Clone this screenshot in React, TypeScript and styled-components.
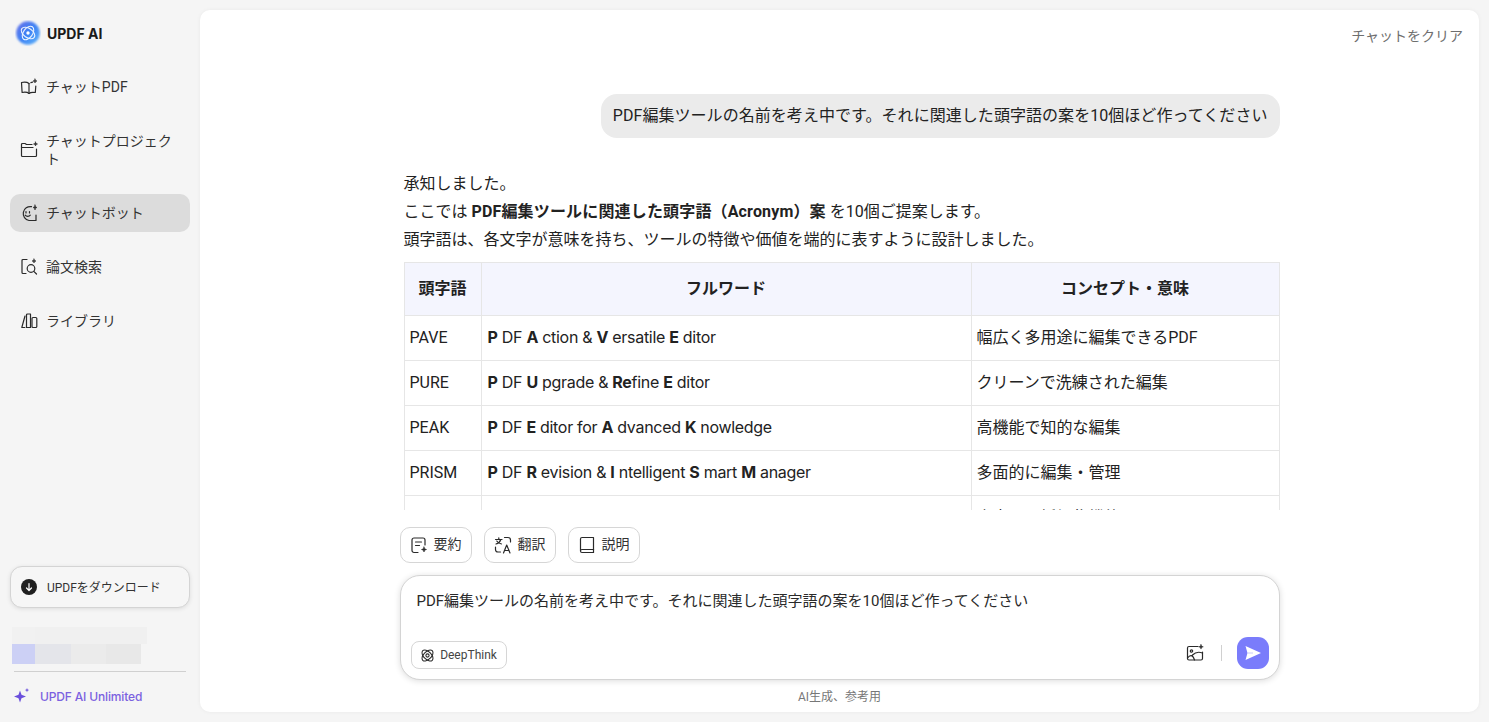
import React from "react";
import styled, { createGlobalStyle } from "styled-components";

const FONT = `Roboto, "Noto Sans CJK JP", "Noto Sans", sans-serif`;
const BRAND_FONT = `Inter, "Noto Sans", sans-serif`;

const Global = createGlobalStyle`
  html, body, #root { margin: 0; height: 100%; }
  body { background: #f5f5f5; font-family: ${FONT}; color: #222; overflow: hidden; }
  * { box-sizing: border-box; }
`;

const Shell = styled.div`
  display: flex;
  height: 100vh;
`;

const Sidebar = styled.aside`
  width: 200px;
  flex: none;
  display: flex;
  flex-direction: column;
  padding: 21px 10px 0;
`;

const Brand = styled.div`
  display: flex;
  align-items: center;
  gap: 7px;
  height: 24px;
  padding-left: 6px;
  font-family: ${BRAND_FONT};
  font-size: 14px;
  font-weight: 700;
  color: #1a1a1a;
  margin-bottom: 23px;
`;

const Nav = styled.nav`
  display: flex;
  flex-direction: column;
  gap: 16px;
`;

const NavItem = styled.div<{ $active?: boolean }>`
  display: flex;
  align-items: center;
  gap: 8px;
  padding: 10px;
  border-radius: 10px;
  font-size: 14px;
  line-height: 18px;
  color: #333;
  background: ${(p) => (p.$active ? "#dcdcdc" : "transparent")};
  svg { flex: none; }
`;

const Spacer = styled.div`
  flex: 1;
`;

const DownloadButton = styled.div`
  height: 42px;
  display: flex;
  align-items: center;
  gap: 10px;
  padding-left: 10px;
  border: 1px solid #d4d4d4;
  border-radius: 12px;
  background: #f6f6f6;
  box-shadow: 0 1px 4px rgba(0, 0, 0, 0.1);
  font-size: 12px;
  color: #333;
`;

const DownloadLabel = styled.span`
  padding-bottom: 2px;
`;

const DownloadDot = styled.span`
  width: 16px;
  height: 16px;
  border-radius: 50%;
  background: #1f1f1f;
  display: flex;
  align-items: center;
  justify-content: center;
`;

const Mosaic = styled.div`
  margin: 19px 0 0 2px;
  display: flex;
  flex-direction: column;
`;

const MosaicRow = styled.div`
  display: flex;
`;

const MosaicCell = styled.div<{ $w: number; $h: number; $c: string }>`
  width: ${(p) => p.$w}px;
  height: ${(p) => p.$h}px;
  background: ${(p) => p.$c};
`;

const Divider = styled.div`
  height: 1px;
  background: #d0d0d0;
  margin: 7px 4px 0;
`;

const Unlimited = styled.div`
  display: flex;
  align-items: center;
  gap: 9px;
  height: 50px;
  padding: 0 0 2px 4px;
  font-family: ${BRAND_FONT};
  font-size: 12px;
  font-weight: 500;
  letter-spacing: -0.15px;
  color: #7b61e0;
`;

const Main = styled.main`
  flex: 1;
  margin: 10px 10px 10px 0;
  background: #fff;
  border-radius: 10px;
  box-shadow: 0 0 4px rgba(0, 0, 0, 0.05);
  display: flex;
  flex-direction: column;
  align-items: center;
  min-width: 0;
`;

const TopBar = styled.div`
  align-self: stretch;
  height: 50px;
  flex: none;
  display: flex;
  justify-content: flex-end;
  align-items: center;
  padding: 0 16px 1px 0;
  font-size: 14px;
  color: #6e6e6e;
`;

const Conversation = styled.div`
  width: 880px;
  height: 450px;
  flex: none;
  overflow: hidden;
  padding: 34px 0 0 4px;
`;

const UserRow = styled.div`
  display: flex;
  justify-content: flex-end;
  margin-bottom: 32px;
`;

const UserBubble = styled.div`
  background: #ebebeb;
  border-radius: 16px;
  padding: 10px 12px;
  font-size: 16px;
  line-height: 24px;
  letter-spacing: 0.05px;
  color: #222;
  white-space: nowrap;
`;

const Paragraph = styled.p`
  margin: 0;
  font-size: 16px;
  line-height: 28px;
  color: #222;
  b { font-weight: 700; letter-spacing: 0.16px; }
`;

const Table = styled.table`
  margin-top: 8px;
  width: 875px;
  table-layout: fixed;
  border-collapse: collapse;
  font-size: 16px;
  color: #222;
`;

const Th = styled.th<{ $w: number }>`
  width: ${(p) => p.$w}px;
  height: 53px;
  background: #f4f5fe;
  border: 1px solid #e6e6e6;
  font-weight: 700;
  text-align: center;
  padding: 0 6px 5px;
`;

const Td = styled.td`
  height: 45px;
  border: 1px solid #e6e6e6;
  padding: 0 5px;
  line-height: 24px;
`;

const WordCell = styled(Td)`
  padding: 0 5px 2px 6px;
  font-family: ${BRAND_FONT};
  letter-spacing: -0.3px;
  b { font-weight: 700; }
`;

const Chips = styled.div`
  width: 880px;
  flex: none;
  display: flex;
  gap: 12px;
  margin-top: 17px;
`;

const Chip = styled.div`
  width: 72px;
  height: 36px;
  display: flex;
  align-items: center;
  justify-content: center;
  gap: 6px;
  border: 1px solid #d6d6d6;
  border-radius: 10px;
  background: #fff;
  font-size: 14px;
  color: #333;
`;

const ChipLabel = styled.span`
  padding-bottom: 4px;
`;

const Composer = styled.div`
  width: 880px;
  height: 105px;
  flex: none;
  margin-top: 12px;
  border: 1px solid #d4d4d4;
  border-radius: 20px;
  background: #fff;
  box-shadow: 0 1px 6px rgba(0, 0, 0, 0.14);
  padding: 15px 10px 10px;
  display: flex;
  flex-direction: column;
  justify-content: space-between;
`;

const Prompt = styled.div`
  font-size: 15px;
  line-height: 21px;
  padding-left: 6px;
  color: #2a2a2a;
`;

const ComposerBar = styled.div`
  display: flex;
  align-items: center;
  justify-content: space-between;
`;

const DeepThink = styled.div`
  width: 96px;
  height: 28px;
  margin-top: 4px;
  display: flex;
  align-items: center;
  justify-content: center;
  gap: 5px;
  border: 1px solid #d6d6d6;
  border-radius: 8px;
  font-size: 12px;
  color: #444;
`;

const Tools = styled.div`
  display: flex;
  align-items: center;
`;

const ToolSep = styled.div`
  width: 1px;
  height: 16px;
  background: #d0d0d0;
  margin: 0 15px 0 17px;
`;

const SendButton = styled.div`
  width: 32px;
  height: 32px;
  border-radius: 11px;
  background: #7a7cfb;
  display: flex;
  align-items: center;
  justify-content: center;
`;

const Disclaimer = styled.div`
  flex: none;
  margin-top: 9px;
  font-size: 12px;
  line-height: 16px;
  color: #777;
`;

const Line = styled.svg.attrs({ fill: "none", stroke: "#2a2a2a", strokeWidth: 1.2, strokeLinecap: "round", strokeLinejoin: "round" })``;

const LogoBox = styled.svg`
  margin: 0 -1px;
  flex: none;
`;

const Logo = () => (
  <LogoBox width="26" height="26" viewBox="0 0 26 26">
    <defs>
      <linearGradient id="lg" x1="0" y1="0" x2="1" y2="1">
        <stop offset="0" stopColor="#6a6fe8" />
        <stop offset="0.5" stopColor="#3d82f5" />
        <stop offset="1" stopColor="#62b8fa" />
      </linearGradient>
      <filter id="soft" x="-20%" y="-20%" width="140%" height="140%">
        <feGaussianBlur stdDeviation="0.8" />
      </filter>
    </defs>
    <circle cx="13" cy="13" r="11.8" fill="url(#lg)" filter="url(#soft)" />
    <g fill="none" stroke="#eaf3ff" strokeWidth="1.100" strokeLinecap="round">
      <ellipse cx="13" cy="13" rx="7.600" ry="4.600" transform="rotate(35 13 13)" />
      <ellipse cx="13" cy="13" rx="7.600" ry="4.600" transform="rotate(-55 13 13)" />
    </g>
    <circle cx="13" cy="13" r="1.700" fill="#fff" />
  </LogoBox>
);

const BookIcon = () => (
  <Line width="18" height="18" viewBox="0 0 18 18">
    <path d="M9 5.500C7.500 4.300 4.500 3.900 1.500 4.500l.6 10c2.700-.5 5.400-.3 6.900 1 1.500-1.300 3.400-1.500 6.300-1l.5-6.500" />
    <path d="M9 5.500v10" />
    <path d="M10.800 4.700c.7-.3 1.200-.4 1.800-.5" />
    <path d="M15 1l.5 1.500L17 3l-1.500.5L15 5l-.5-1.500L13 3l1.500-.5z" fill="#2a2a2a" strokeWidth=".6" />
  </Line>
);

const FolderIcon = () => (
  <Line width="18" height="18" viewBox="0 0 18 18">
    <path d="M12 3.500H6.500L5 2.500H2.500a1 1 0 0 0-1 1v11a1 1 0 0 0 1 1h13a1 1 0 0 0 1-1V8" />
    <path d="M1.500 6.500H13" />
    <path d="M15.500 1l.5 1.500 1.500.5-1.500.5-.5 1.500-.5-1.500L13.500 3l1.500-.5z" fill="#2a2a2a" strokeWidth=".6" />
  </Line>
);

const BotIcon = () => (
  <Line width="18" height="18" viewBox="0 0 18 18">
    <path d="M11.500 2.700A7 7 0 1 0 9 16.500h7V11" />
    <path d="M6 7.500v1.500M9.500 7.500v1.500" />
    <path d="M5.200 11.200c1.100 1.500 4 1.500 5.100 0" />
    <path d="M15 1l.5 1.800L17 3.500l-1.500.6L15 6l-.5-1.900L13 3.500l1.500-.7z" fill="#2a2a2a" strokeWidth=".6" />
  </Line>
);

const SearchDocIcon = () => (
  <Line width="18" height="18" viewBox="0 0 18 18">
    <path d="M7 1.500H3a1 1 0 0 0-1 1v12a1 1 0 0 0 1 1h3" />
    <circle cx="11" cy="10.500" r="3.800" />
    <path d="M13.800 13.300l2.700 2.700" />
    <path d="M14 1l.5 1.500L16 3l-1.500.5L14 5l-.5-1.500L12 3l1.500-.5z" fill="#2a2a2a" strokeWidth=".6" />
  </Line>
);

const LibraryIcon = () => (
  <Line width="18" height="18" viewBox="0 0 18 18">
    <path d="M5 4 1.800 15.500h3" />
    <path d="M6.500 15.500V3a1 1 0 0 1 1-1H10.500v13.500" />
    <rect x="12" y="5.500" width="4.800" height="10" rx="1" />
    <path d="M6.500 15.500h4" />
  </Line>
);

const Sparkle = () => (
  <svg width="17" height="16" viewBox="0 0 17 16" fill="#6a4fdc">
    <path d="M6 2.500l1.500 4.300L12 8.500 7.500 10.200 6 14.500 4.500 10.200 0 8.500l4.500-1.700z" />
    <path d="M13 0l.6 1.500 1.500.6-1.500.6-.6 1.500-.6-1.500-1.500-.6 1.500-.6z" />
  </svg>
);

const SummaryIcon = () => (
  <Line width="18" height="18" viewBox="0 0 18 18">
    <path d="M8 16.500H4a2 2 0 0 1-2-2V4a2 2 0 0 1 2-2h9a2 2 0 0 1 2 2v5" />
    <path d="M5.500 6h6M5.500 9.500h4" />
    <path d="M14 11l.7 1.800 1.800.7-1.800.7L14 16l-.7-1.800-1.800-.7 1.800-.7z" fill="#2a2a2a" strokeWidth=".6" />
  </Line>
);

const TranslateIcon = () => (
  <Line width="18" height="18" viewBox="0 0 18 18">
    <path d="M1.500 3.500h6.500M4.800 1.800v1.700M6.800 3.500C6.200 5.500 4 7.500 2 8M2.800 5c.6 1.300 2.700 2.600 4.700 3" />
    <path d="M10.500 1.500H14a2.500 2.500 0 0 1 2.500 2.500v2" />
    <path d="M1.500 11v2.500A2.500 2.500 0 0 0 4 16h2.500" />
    <path d="M9.500 17l3.200-8 3.300 8M10.600 14.500h4.200" />
  </Line>
);

const ExplainIcon = () => (
  <Line width="18" height="18" viewBox="0 0 18 18">
    <path d="M2.500 15V3A1.500 1.500 0 0 1 4 1.500h11.500v12H4A1.500 1.500 0 0 0 2.500 15 1.500 1.500 0 0 0 4 16.500h11.500" />
    <path d="M15.500 13.500v3" />
  </Line>
);

const AtomIcon = () => (
  <svg width="15" height="15" viewBox="0 0 14 14" fill="none" stroke="#2a2a2a" strokeWidth="1">
    <ellipse cx="7" cy="7" rx="6.300" ry="3.600" transform="rotate(45 7 7)" />
    <ellipse cx="7" cy="7" rx="6.300" ry="3.600" transform="rotate(-45 7 7)" />
    <circle cx="7" cy="7" r="1.500" />
  </svg>
);

const ImageAddIcon = () => (
  <Line width="18" height="18" viewBox="0 0 18 18" strokeWidth={1.3}>
    <path d="M12 2.500H3A1.500 1.500 0 0 0 1.500 4v10.500A1.500 1.500 0 0 0 3 16h12a1.500 1.500 0 0 0 1.500-1.500V8" />
    <circle cx="5.500" cy="7" r="1.200" />
    <path d="M1.500 14c2.500-3.500 5.500-3.500 7 2M6.500 11c2.500-2.500 6-3.500 10-2" />
    <path d="M15 .5l.6 1.700 1.700.6-1.700.6-.6 1.700-.6-1.700-1.700-.6 1.700-.6z" fill="#1f1f1f" strokeWidth=".5" />
  </Line>
);

const SendIcon = () => (
  <svg width="18" height="16" viewBox="0 0 18 16">
    <path d="M1.500 1 17 8 1.500 15 3.500 8z" fill="#fff" />
    <path d="M3.500 8H9" stroke="#c9caf9" strokeWidth="1" />
  </svg>
);

const rows: [string, React.ReactNode, string][] = [
  ["PAVE", <><b>P</b> DF <b>A</b> ction &amp; <b>V</b> ersatile <b>E</b> ditor</>, "幅広く多用途に編集できるPDF"],
  ["PURE", <><b>P</b> DF <b>U</b> pgrade &amp; <b>Re</b>fine <b>E</b> ditor</>, "クリーンで洗練された編集"],
  ["PEAK", <><b>P</b> DF <b>E</b> ditor for <b>A</b> dvanced <b>K</b> nowledge</>, "高機能で知的な編集"],
  ["PRISM", <><b>P</b> DF <b>R</b> evision &amp; <b>I</b> ntelligent <b>S</b> mart <b>M</b> anager</>, "多面的に編集・管理"],
  ["", <><b>P</b> DF <b>D</b> ocument <b>A</b> ssistant <b>T</b> oolkit</>, "文書の一括編集機能"],
];

export default function App() {
  return (
    <Shell>
      <Global />
      <Sidebar>
        <Brand><Logo />UPDF AI</Brand>
        <Nav>
          <NavItem><BookIcon />チャットPDF</NavItem>
          <NavItem><FolderIcon />チャットプロジェクト</NavItem>
          <NavItem $active><BotIcon />チャットボット</NavItem>
          <NavItem><SearchDocIcon />論文検索</NavItem>
          <NavItem><LibraryIcon />ライブラリ</NavItem>
        </Nav>
        <Spacer />
        <DownloadButton>
          <DownloadDot>
            <svg width="10" height="10" viewBox="0 0 10 10" fill="none" stroke="#fff" strokeWidth="1.200" strokeLinecap="round" strokeLinejoin="round">
              <path d="M5 1.500v7M2.500 6 5 8.500 7.500 6" />
            </svg>
          </DownloadDot>
          <DownloadLabel>UPDFをダウンロード</DownloadLabel>
        </DownloadButton>
        <Mosaic>
          <MosaicRow>
            <MosaicCell $w={23} $h={17} $c="#f1f1f1" />
            <MosaicCell $w={112} $h={17} $c="#f0f0f0" />
          </MosaicRow>
          <MosaicRow>
            <MosaicCell $w={23} $h={20} $c="#ccd0f5" />
            <MosaicCell $w={36} $h={20} $c="#e4e5ea" />
            <MosaicCell $w={35} $h={20} $c="#ebebeb" />
            <MosaicCell $w={35} $h={20} $c="#e8e8e8" />
          </MosaicRow>
        </Mosaic>
        <Divider />
        <Unlimited><Sparkle />UPDF AI Unlimited</Unlimited>
      </Sidebar>
      <Main>
        <TopBar>チャットをクリア</TopBar>
        <Conversation>
          <UserRow>
            <UserBubble>PDF編集ツールの名前を考え中です。それに関連した頭字語の案を10個ほど作ってください</UserBubble>
          </UserRow>
          <Paragraph>承知しました。</Paragraph>
          <Paragraph>ここでは <b>PDF編集ツールに関連した頭字語（Acronym）案</b> を10個ご提案します。</Paragraph>
          <Paragraph>頭字語は、各文字が意味を持ち、ツールの特徴や価値を端的に表すように設計しました。</Paragraph>
          <Table>
            <thead>
              <tr>
                <Th $w={77}>頭字語</Th>
                <Th $w={490}>フルワード</Th>
                <Th $w={308}>コンセプト・意味</Th>
              </tr>
            </thead>
            <tbody>
              {rows.map(([a, b, c], i) => (
                <tr key={i}>
                  <Td>{a}</Td>
                  <WordCell>{b}</WordCell>
                  <Td>{c}</Td>
                </tr>
              ))}
            </tbody>
          </Table>
        </Conversation>
        <Chips>
          <Chip><SummaryIcon /><ChipLabel>要約</ChipLabel></Chip>
          <Chip><TranslateIcon /><ChipLabel>翻訳</ChipLabel></Chip>
          <Chip><ExplainIcon /><ChipLabel>説明</ChipLabel></Chip>
        </Chips>
        <Composer>
          <Prompt>PDF編集ツールの名前を考え中です。それに関連した頭字語の案を10個ほど作ってください</Prompt>
          <ComposerBar>
            <DeepThink><AtomIcon />DeepThink</DeepThink>
            <Tools>
              <ImageAddIcon />
              <ToolSep />
              <SendButton><SendIcon /></SendButton>
            </Tools>
          </ComposerBar>
        </Composer>
        <Disclaimer>AI生成、参考用</Disclaimer>
      </Main>
    </Shell>
  );
}
